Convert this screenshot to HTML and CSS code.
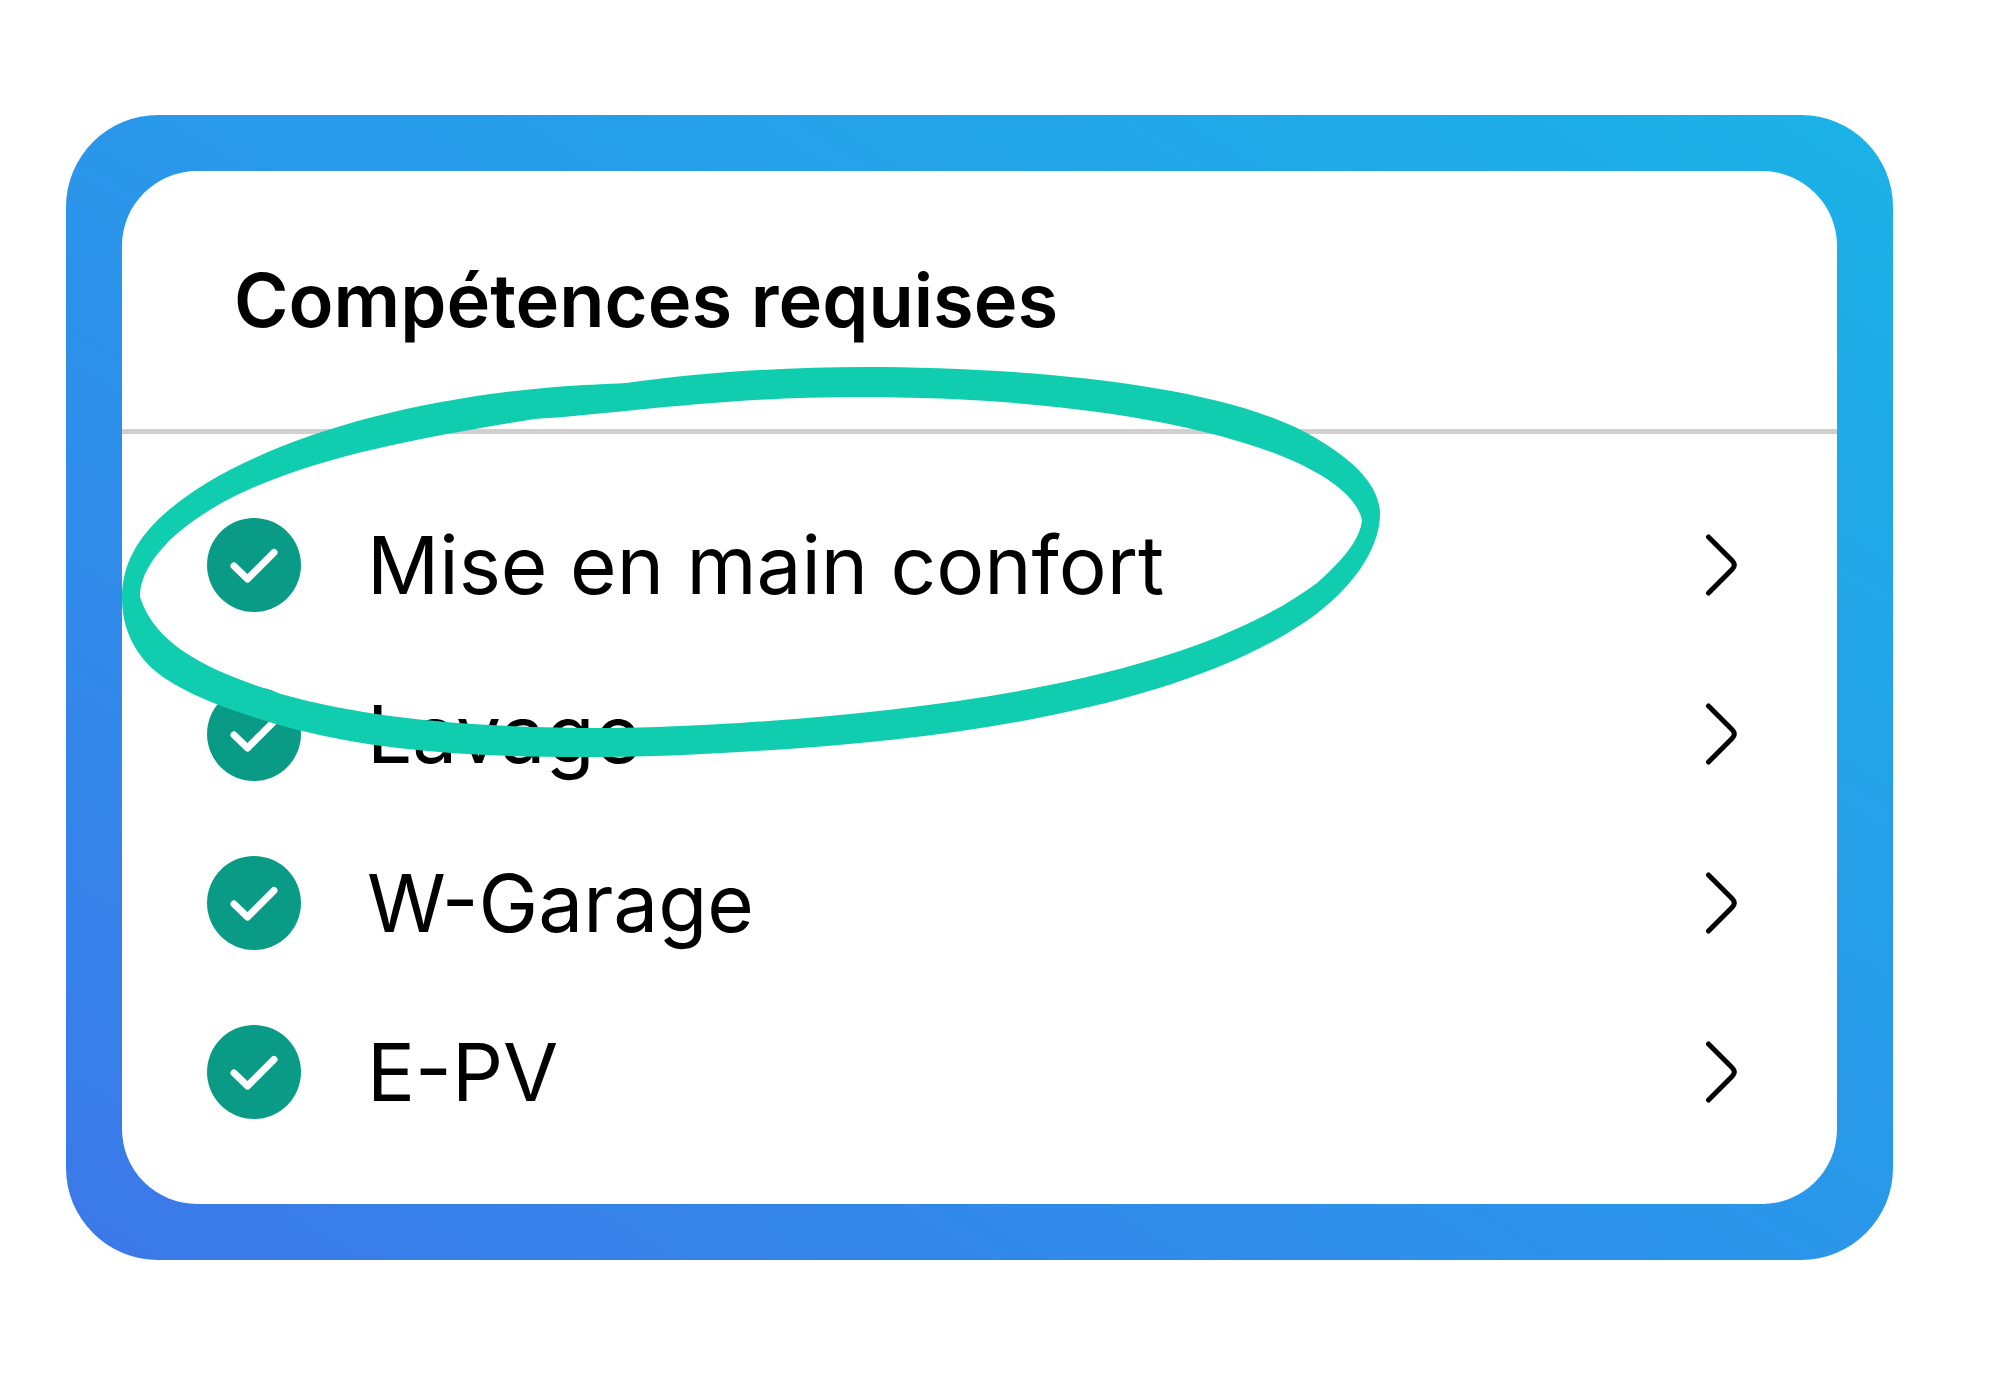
FILE: index.html
```
<!DOCTYPE html>
<html lang="fr">
<head>
    <meta charset="UTF-8">
    <meta name="viewport" content="width=device-width, initial-scale=1.0">
    <title>Compétences requises</title>
    <link rel="stylesheet" href="styles.css">
</head>
<body>
    <!-- Shared icons -->
    <svg class="sprite" aria-hidden="true">
        <symbol id="check" viewBox="0 0 94 94">
            <circle cx="47" cy="47" r="47" fill="#099b86"/>
            <path d="M27 48L40.500 61L67 34.500" fill="none" stroke="#fff" stroke-width="7" stroke-linecap="round" stroke-linejoin="round"/>
        </symbol>
        <symbol id="chevron" viewBox="0 0 32 62">
            <path d="M3.500 3L27 26.500Q31.500 31 27 35.500L3.500 59" fill="none" stroke="#000" stroke-width="5" stroke-linecap="round"/>
        </symbol>
    </svg>

    <main class="frame">
        <section class="card">
            <h1 class="card-title">Compétences requises</h1>
            <ul class="skills">
                <li>
                    <a class="skill" href="#mise-en-main">
                        <svg class="check"><use href="#check"/></svg>
                        <span class="skill-name">Mise en main confort</span>
                        <svg class="chevron"><use href="#chevron"/></svg>
                    </a>
                </li>
                <li>
                    <a class="skill" href="#lavage">
                        <svg class="check"><use href="#check"/></svg>
                        <span class="skill-name">Lavage</span>
                        <svg class="chevron"><use href="#chevron"/></svg>
                    </a>
                </li>
                <li>
                    <a class="skill" href="#w-garage">
                        <svg class="check"><use href="#check"/></svg>
                        <span class="skill-name">W-Garage</span>
                        <svg class="chevron"><use href="#chevron"/></svg>
                    </a>
                </li>
                <li>
                    <a class="skill" href="#e-pv">
                        <svg class="check"><use href="#check"/></svg>
                        <span class="skill-name">E-PV</span>
                        <svg class="chevron"><use href="#chevron"/></svg>
                    </a>
                </li>
            </ul>

            <!-- Hand-drawn circle around the first skill -->
            <svg class="highlight" viewBox="122 367 1258 390" aria-hidden="true">
                <path fill="#11cdb0" fill-rule="evenodd" d="M122 598C122 564 138 538 163 515C240 446 395 400 555 387C580 385 605 384 626 383C700 373 780 367 866 367C1000 367 1200 380 1299 429C1352 456 1380 485 1380 514C1380 550 1350 591 1308 620C1182 706 960 740 740 752C690 755 640 757 584 757C480 757 385 752 298 730C240 714 195 699 163 677C136 658 122 630 122 598Z
                M140 597C140 577 152 558 171 539C248 467 400 441 534 419C610 415 720 397 857 397C1160 397 1348 458 1362 520C1360 539 1345 558 1317 583C1195 674 965 708 740 723C700 725 650 728 605 728C500 728 380 722 281 694C225 675 158 653 140 597Z"/>
            </svg>
        </section>
    </main>
</body>
</html>
```
FILE: styles.css
```
* {
    box-sizing: border-box;
}
body {
    margin: 0;
    padding: 115px 107px 114px 66px;
    font-family: Inter, "Open Sans", sans-serif;
    background: #fff;
    color: #000;
}
.sprite {
    position: absolute;
    width: 0;
    height: 0;
}
.frame {
    padding: 56px;
    border-radius: 92px;
    background: linear-gradient(to top right, #3c78e9, #2a97ea 50%, #1bb2e6);
}
.card {
    position: relative;
    border-radius: 75px;
    background: #fff;
}
.card-title {
    margin: 0;
    padding: 87px 112px;
    border-bottom: 5px solid #d0d0d0;
    font-size: 74px;
    font-weight: 600;
    line-height: 84px;
}
.skills {
    margin: 0;
    padding: 46px 0 48px;
    list-style: none;
}
.skill {
    display: flex;
    align-items: center;
    height: 169px;
    padding: 0 100px 0 85px;
    color: inherit;
    text-decoration: none;
}
.check {
    width: 94px;
    height: 94px;
}
.skill-name {
    flex: 1;
    margin-left: 66px;
    font-size: 80px;
    line-height: 88px;
}
.chevron {
    width: 32px;
    height: 62px;
}
.highlight {
    position: absolute;
    top: 196px;
    left: 0;
    width: 1258px;
    height: 390px;
    pointer-events: none;
}
```
